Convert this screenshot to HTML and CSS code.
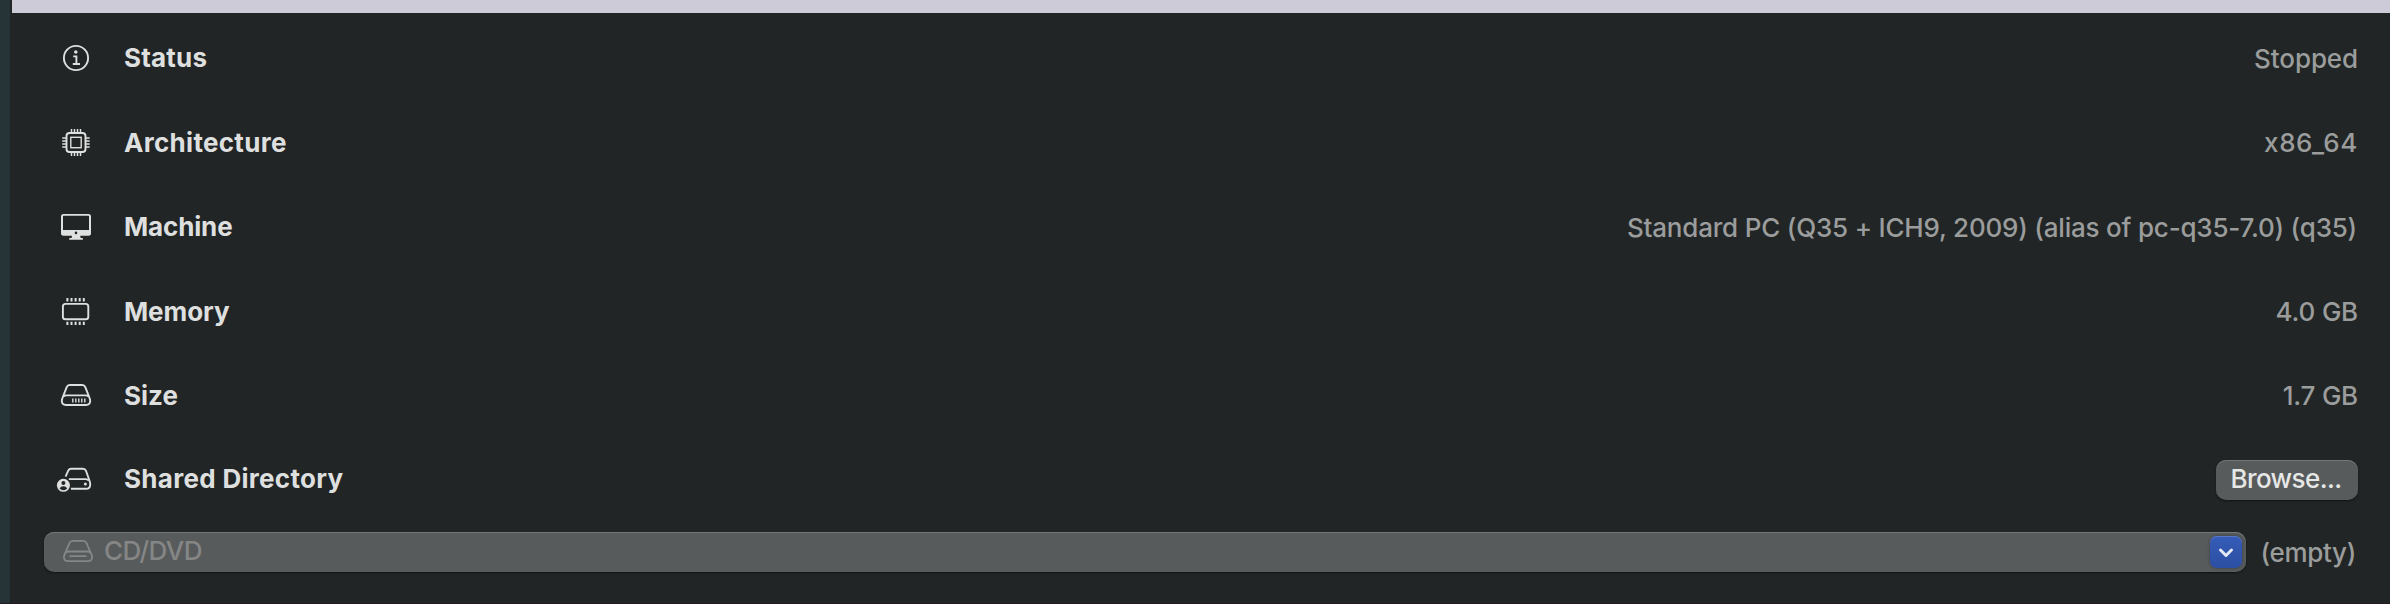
FILE: index.html
```html
<!DOCTYPE html>
<html lang="en">
<head>
<meta charset="utf-8">
<title>Virtual machine details</title>
<link rel="stylesheet" href="styles.css">
</head>
<body>
<div class="window">
  <div class="sidebar-edge"></div>
  <main class="content">
    <div class="preview-edge"></div>
    <div class="details">
      <div class="row">
        <svg class="icon" viewBox="0 0 40 40"><g class="line"><circle cx="20" cy="20" r="12.1"/><path d="M17.2 18.4H20.4V25.8M16.8 26H24"/></g><circle class="fill" cx="19.8" cy="14" r="1.8"/></svg>
        <span class="label l-status">Status</span><span class="value low v-status">Stopped</span>
      </div>
      <div class="row">
        <svg class="icon" viewBox="0 0 40 40"><g class="line"><rect x="10.5" y="10" width="19" height="19" rx="3"/><rect x="14.8" y="14.3" width="10.4" height="10.4" stroke-width="1.4"/><path d="M15.5 6v4M18.5 6v4M21.5 6v4M24.5 6v4M15.5 29v4M18.5 29v4M21.5 29v4M24.5 29v4M6.2 15h4M6.2 18h4M6.2 21h4M6.2 24h4M29.7 15h4M29.7 18h4M29.7 21h4M29.7 24h4" stroke-width="1.5"/></g></svg>
        <span class="label l-arch">Architecture</span><span class="value v-arch">x86_64</span>
      </div>
      <div class="row">
        <svg class="icon" viewBox="0 0 40 40"><path class="fill" fill-rule="evenodd" d="M7.5 7H32.5Q35 7 35 9.5V26.2Q35 28.7 32.5 28.7H24.2L24.6 31H26.5Q27 31 27 32.8H13.2Q13 31 13.6 31H15.6L16 28.7H7.5Q5 28.7 5 26.2V9.5Q5 7 7.5 7ZM7.7 8.8Q7 8.8 7 9.5V23H33V9.5Q33 8.8 32.3 8.8ZM20 24.6A1.3 1.3 0 1 0 20 27.2A1.3 1.3 0 1 0 20 24.6Z"/></svg>
        <span class="label l-machine">Machine</span><span class="value low v-machine">Standard PC (Q35 + ICH9, 2009) (alias of pc-q35-7.0) (q35)</span>
      </div>
      <div class="row">
        <svg class="icon" viewBox="0 0 40 40"><g class="line"><rect x="6.9" y="11.9" width="25.4" height="15.4" rx="2.6"/><path d="M11.4 6v3.4M15.5 6v3.4M19.6 6v3.4M23.7 6v3.4M27.8 6v3.4M11.4 29.8v3.2M15.5 29.8v3.2M19.6 29.8v3.2M23.7 29.8v3.2M27.8 29.8v3.2" stroke-width="2"/></g></svg>
        <span class="label l-memory">Memory</span><span class="value v-memory">4.0 GB</span>
      </div>
      <div class="row">
        <svg class="icon" viewBox="0 0 40 40"><g class="line"><path d="M13.8 9H26.2Q28.5 9 29.3 11.1L33.3 21.4Q34.2 23.5 34.2 24.8Q34.2 29 30 29H10Q5.8 29 5.8 24.8Q5.8 23.5 6.7 21.4L10.7 11.1Q11.5 9 13.8 9Z"/><path d="M7.3 20.6Q8.5 19.4 10.5 19.4H29.5Q31.5 19.4 32.7 20.6"/><path d="M16.8 22.4v4.2M19.8 22.4v4.2M22.8 22.4v4.2M25.8 22.4v4.2M28.8 22.4v4.2" stroke-width="1.4"/></g></svg>
        <span class="label l-size">Size</span><span class="value v-size">1.7 GB</span>
      </div>
      <div class="row">
        <svg class="icon" viewBox="0 0 40 40"><g class="line"><path d="M9.6 17.6L12.2 11.7Q13.2 9.8 15.4 9.8H27Q29.2 9.8 30 11.8L33.6 22Q34.2 23.8 34.2 25.5Q34.2 29.8 30 29.8H14.9"/><path d="M12.8 20.1H29.5Q31.5 20.1 32.8 21.5"/></g><circle class="fill" cx="29.4" cy="25" r="1.5"/><circle class="fill" cx="7.4" cy="26.3" r="6.5"/><circle class="hole" cx="7.4" cy="24" r="2"/><path class="hole" d="M3.6 29.6Q4.7 27.2 7.4 27.2T11.2 29.6Q9.6 31.3 7.4 31.3T3.6 29.6Z"/></svg>
        <span class="label l-shared">Shared Directory</span>
        <button class="browse" type="button"><span>Browse...</span></button>
      </div>
      <div class="drive">
        <div class="popup">
          <svg class="drive-icon" viewBox="0 0 34 30"><g><path d="M11.8 4.9H22.2Q24.5 4.9 25.4 6.9L30 17.5Q31.1 19.8 31.1 21Q31.1 25.1 27 25.1H7Q2.9 25.1 2.9 21Q2.9 19.8 4 17.5L8.6 6.9Q9.5 4.9 11.8 4.9Z"/><path d="M4.5 16.6Q5.7 15.5 7.5 15.5H26.5Q28.3 15.5 29.5 16.6M8.5 20.2H25.5"/></g></svg>
          <span class="drive-name">CD/DVD</span>
          <span class="arrow"><svg viewBox="0 0 32 32"><path d="M10.5 14L16 19.5L21.5 14"/></svg></span>
        </div>
        <span class="empty">(empty)</span>
      </div>
    </div>
  </main>
</div>
</body>
</html>
```
FILE: styles.css
```css
* { box-sizing: border-box; }
body {
  margin: 0;
  background: #212525;
  font: 450 26px/32px Inter, "Liberation Sans", sans-serif;
  color: #dedfdf;
}
.window { display: flex; width: 2390px; height: 604px; overflow: hidden; border-bottom: 1px solid #231b20; }
.sidebar-edge { width: 10px; background: #263438; }
.content { flex: 1; padding-left: 2px; }
.preview-edge { height: 13px; background: #cecbd8; }
.details {
  display: grid;
  grid-template-rows: 85px 84px 85px 84px 83px 95px 40px;
  padding: 3px 32px 0 32px;
}
.row { display: flex; align-items: flex-start; padding: 26px 0 0 12px; }
.icon { width: 40px; height: 40px; margin-top: -4px; flex: none; overflow: visible; }
.line { fill: none; stroke: #dedfdf; stroke-width: 1.9; }
.fill { fill: #dedfdf; }
.hole { fill: #212525; }
.label { margin-left: 28px; font-weight: 700; white-space: nowrap; }
.l-status { letter-spacing: 0.2px; }
.l-arch, .l-shared { letter-spacing: 0.3px; }
.l-machine { letter-spacing: -0.15px; }
.l-memory { letter-spacing: -0.1px; }
.value { margin-left: auto; color: #9b9c9c; white-space: nowrap; letter-spacing: -0.2px; }
.v-status { letter-spacing: -0.1px; }
.v-arch { letter-spacing: 0.6px; }
.v-machine { letter-spacing: -0.2px; margin-right: 1px; }
.low { padding-top: 1px; }
.browse {
  width: 142px; height: 40px; margin: -3px 0 0 auto; padding: 0;
  border: 0; border-radius: 10px;
  background: #585b5b;
  box-shadow: inset 0 1px 0 #747777, 0 1px 2px #111414;
  color: #e6e7e7; font: inherit; letter-spacing: -0.6px;
}
.browse span { position: relative; top: -1px; left: -1px; }
.drive { display: flex; }
.popup {
  display: flex; align-items: flex-start;
  width: 2202px; height: 40px; padding: 4px 4px 0 17px;
  border-radius: 10px; background: #585b5b;
  box-shadow: inset 0 1px 0 #747777, 0 1px 2px #111414;
}
.drive-icon { width: 34px; height: 30px; fill: none; stroke: #858888; stroke-width: 1.8; }
.drive-name { margin: -1px 0 0 9px; color: #858686; letter-spacing: -0.6px; }
.arrow {
  width: 32px; height: 32px; margin-left: auto; border-radius: 7px;
  background: linear-gradient(#355cb8, #2b4fa2);
  box-shadow: inset 0 1px 0 #5878c4, 0 0 3px #353a44;
}
.arrow svg { display: block; fill: none; stroke: #e4e8f2; stroke-width: 3; stroke-linecap: round; stroke-linejoin: round; }
.empty { margin: 5px 2px 0 auto; color: #9b9c9c; letter-spacing: -0.3px; }
```
